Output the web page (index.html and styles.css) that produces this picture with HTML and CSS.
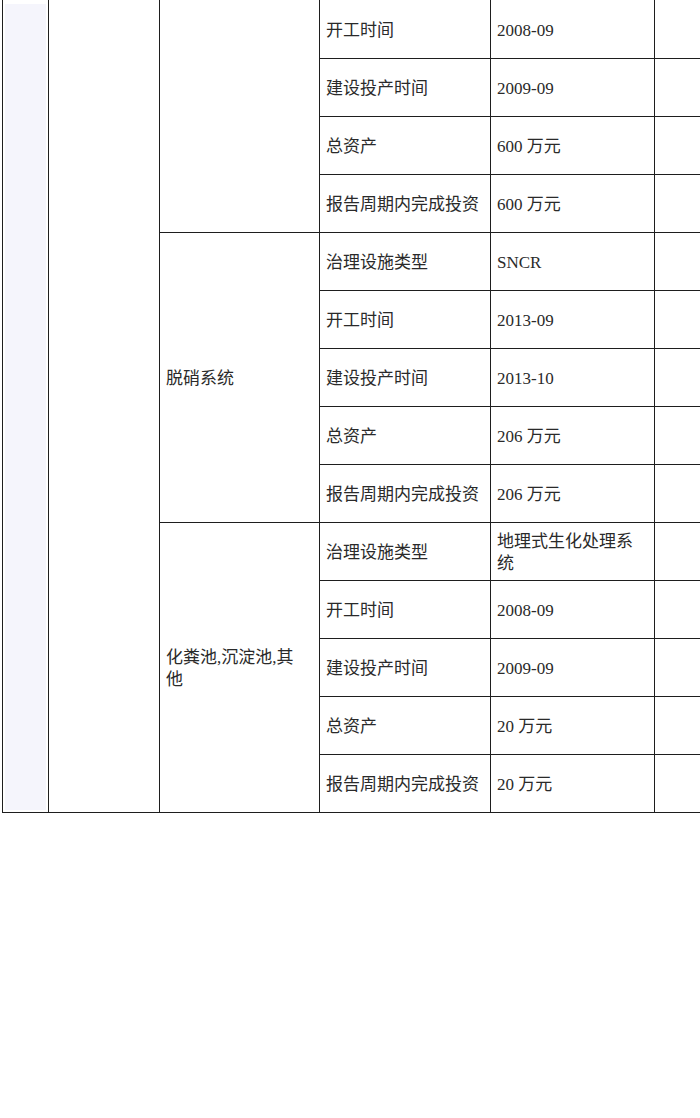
FILE: index.html
```html
<!DOCTYPE html>
<html lang="zh-CN">
<head>
<meta charset="utf-8">
<title>治理设施</title>
<link rel="stylesheet" href="styles.css">
</head>
<body>
<table class="grid">
  <colgroup>
    <col class="c1"><col class="c2"><col class="c3"><col class="c4"><col class="c5"><col class="c6">
  </colgroup>
  <tbody>
    <tr>
      <td class="shade" rowspan="14"></td>
      <td rowspan="14"></td>
      <td rowspan="4"></td>
      <td>开工时间</td><td>2008-09</td><td></td>
    </tr>
    <tr><td>建设投产时间</td><td>2009-09</td><td></td></tr>
    <tr><td>总资产</td><td>600 万元</td><td></td></tr>
    <tr><td>报告周期内完成投资</td><td>600 万元</td><td></td></tr>
    <tr>
      <td class="group" rowspan="5">脱硝系统</td>
      <td>治理设施类型</td><td>SNCR</td><td></td>
    </tr>
    <tr><td>开工时间</td><td>2013-09</td><td></td></tr>
    <tr><td>建设投产时间</td><td>2013-10</td><td></td></tr>
    <tr><td>总资产</td><td>206 万元</td><td></td></tr>
    <tr><td>报告周期内完成投资</td><td>206 万元</td><td></td></tr>
    <tr>
      <td class="group" rowspan="5">化粪池,沉淀池,其他</td>
      <td>治理设施类型</td><td>地理式生化处理系统</td><td></td>
    </tr>
    <tr><td>开工时间</td><td>2008-09</td><td></td></tr>
    <tr><td>建设投产时间</td><td>2009-09</td><td></td></tr>
    <tr><td>总资产</td><td>20 万元</td><td></td></tr>
    <tr><td>报告周期内完成投资</td><td>20 万元</td><td></td></tr>
  </tbody>
</table>
</body>
</html>
```

FILE: styles.css
```css
html, body {
  margin: 0;
  padding: 0;
  background: #fff;
  overflow: hidden;
}

body {
  font-family: "Liberation Serif", "Noto Sans CJK SC", serif;
  font-size: 17px;
  line-height: 22px;
  color: #2a2a2a;
}

.grid {
  margin-left: 2px;
  border-collapse: collapse;
  table-layout: fixed;
  width: 721px;
}

.c1 { width: 46px; }
.c2 { width: 111px; }
.c3 { width: 160px; }
.c4 { width: 171px; }
.c5 { width: 164px; }
.c6 { width: 69px; }

.grid tr {
  height: 58px;
}

.grid td {
  border: 1px solid #1e1e1e;
  padding: 4px 5px 0 6px;
  vertical-align: middle;
  text-align: left;
}

.grid td.group {
  padding-right: 18px;
}

.grid tr:first-child td {
  border-top: 0;
}

.grid td.shade {
  background: #f5f5fc;
  box-shadow: inset 0 0 0 2px #fff, inset 0 4px 0 #fff;
  padding: 0;
}
```
